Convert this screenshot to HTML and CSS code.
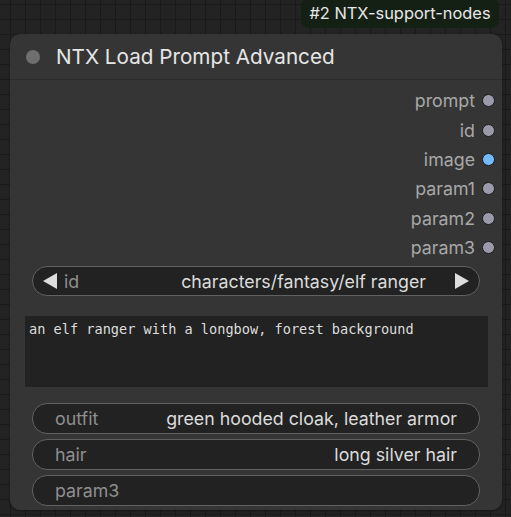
FILE: index.html
```html
<!DOCTYPE html>
<html>
<head>
<meta charset="utf-8">
<link rel="stylesheet" href="styles.css">
</head>
<body>
<div class="canvas">
  <div class="badge-row"><div class="badge">#2 NTX-support-nodes</div></div>
  <div class="node">
    <div class="title"><span class="title-dot"></span><span class="title-text">NTX Load Prompt Advanced</span></div>
    <div class="body">
      <div class="outputs">
        <div class="out"><span class="out-label">prompt</span><span class="slot"></span></div>
        <div class="out"><span class="out-label">id</span><span class="slot"></span></div>
        <div class="out"><span class="out-label">image</span><span class="slot slot-image"></span></div>
        <div class="out"><span class="out-label">param1</span><span class="slot"></span></div>
        <div class="out"><span class="out-label">param2</span><span class="slot"></span></div>
        <div class="out"><span class="out-label">param3</span><span class="slot"></span></div>
      </div>
      <div class="widget combo">
        <svg class="arrow" width="14" height="16" viewBox="0 0 14 16"><polygon points="14,0 14,16 0,8" fill="#dddddd"/></svg>
        <span class="w-label">id</span>
        <span class="w-value">characters/fantasy/elf ranger</span>
        <svg class="arrow" width="14" height="16" viewBox="0 0 14 16"><polygon points="0,0 0,16 14,8" fill="#dddddd"/></svg>
      </div>
      <div class="textarea">an elf ranger with a longbow, forest background</div>
      <div class="strings">
        <div class="widget text"><span class="w-label">outfit</span><span class="w-value">green hooded cloak, leather armor</span></div>
        <div class="widget text"><span class="w-label">hair</span><span class="w-value">long silver hair</span></div>
        <div class="widget text"><span class="w-label">param3</span><span class="w-value"></span></div>
      </div>
    </div>
  </div>
</div>
</body>
</html>
```
FILE: styles.css
```css
html, body {
  margin: 0;
  padding: 0;
}
body {
  width: 511px;
  height: 517px;
  overflow: hidden;
  background-color: #232323;
  background-image:
    linear-gradient(to right, #1a1a1a 1px, transparent 1px),
    linear-gradient(to bottom, #1a1a1a 1px, transparent 1px);
  background-size: 15px 15px;
  background-position: 10px 4px;
  font-family: Inter, "Liberation Sans", sans-serif;
}
.canvas {
  display: flex;
  flex-direction: column;
}
.badge-row {
  display: flex;
  justify-content: flex-end;
  padding-right: 12px;
  height: 34px;
}
.badge {
  background: #152015;
  color: #e8e8e8;
  font-size: 16.4px;
  height: 30px;
  line-height: 30px;
  width: 198px;
  text-align: center;
  border-radius: 8px;
  margin-top: -2px;
}
.node {
  margin-left: 10px;
  width: 492px;
  height: 476px;
  background: #353535;
  border-radius: 10px;
  box-shadow: 0 1px 3px rgba(0,0,0,0.4);
  display: flex;
  flex-direction: column;
}
.title {
  height: 45px;
  border-bottom: 1px solid #2c2c2c;
  display: flex;
  align-items: center;
  padding-left: 16px;
  gap: 16px;
}
.title-dot {
  width: 14px;
  height: 14px;
  border-radius: 50%;
  background: #6f6f6f;
}
.title-text {
  color: #e6e6e6;
  font-size: 20.7px;
}
.body {
  display: flex;
  flex-direction: column;
}
.outputs {
  padding-top: 6px;
  display: flex;
  flex-direction: column;
}
.out {
  height: 29.4px;
  display: flex;
  align-items: center;
  justify-content: flex-end;
  padding-right: 7px;
  gap: 7px;
}
.out-label {
  color: #a8a8a8;
  font-size: 17.8px;
}
.slot {
  flex: none;
  box-sizing: border-box;
  width: 13px;
  height: 13px;
  border-radius: 50%;
  background: #9a9aaa;
  border: 1.5px solid #1c1c1c;
}
.slot-image {
  background: #72baf9;
}
.widget {
  box-sizing: border-box;
  margin-left: 22px;
  width: 448px;
  height: 30px;
  background: #222222;
  border: 1px solid #616161;
  border-radius: 15px;
  display: flex;
  align-items: center;
  font-size: 17.8px;
}
.combo {
  margin-top: 4px;
  padding: 0 10px;
}
.combo .w-label {
  margin-left: 7px;
}
.combo .w-value {
  margin-right: 29px;
}
.w-label {
  color: #8f8f8f;
}
.w-value {
  color: #dcdcdc;
  margin-left: auto;
  white-space: nowrap;
}
.textarea {
  margin: 20px 0 0 15px;
  width: 463px;
  height: 71px;
  box-sizing: border-box;
  background: #222222;
  color: #dddddd;
  font-family: "DejaVu Sans Mono", monospace;
  font-size: 13.6px;
  padding: 5px 4px;
}
.strings {
  margin-top: 16px;
  display: flex;
  flex-direction: column;
  gap: 5px;
}
.text {
  padding: 0 22px;
  height: 31px;
}
```
